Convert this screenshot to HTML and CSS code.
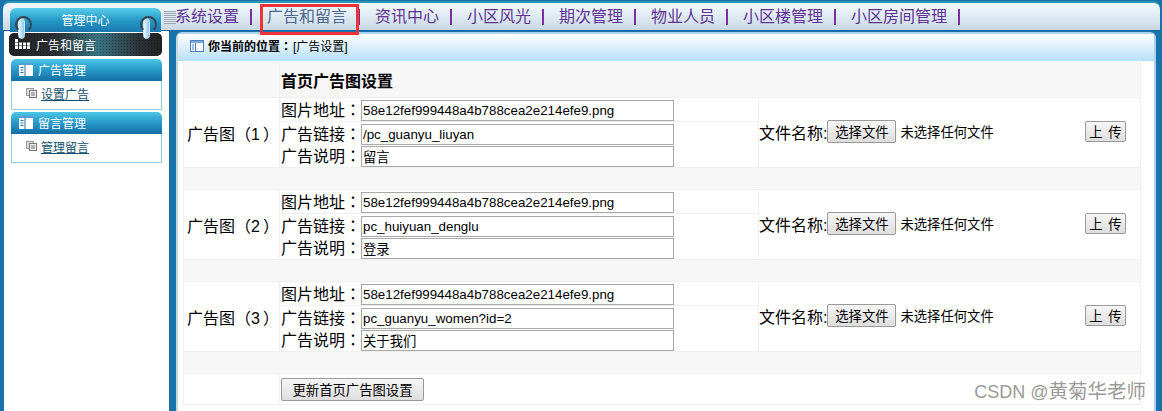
FILE: index.html
```html
<!DOCTYPE html>
<html lang="zh-CN">
<head>
<meta charset="utf-8">
<title>管理中心</title>
<link rel="stylesheet" href="styles.css">
</head>
<body>
<div class="page">
  <header class="top">
    <div class="tab">
      <span class="ring ring-l"></span>
      <span class="tab-title">管理中心</span>
      <span class="ring ring-r"></span>
    </div>
    <nav class="menu">
      <span class="grip"></span>
      <a class="mi">系统设置</a><i class="sep"></i>
      <a class="mi current">广告和留言</a><i class="sep"></i>
      <a class="mi">资讯中心</a><i class="sep"></i>
      <a class="mi">小区风光</a><i class="sep"></i>
      <a class="mi">期次管理</a><i class="sep"></i>
      <a class="mi">物业人员</a><i class="sep"></i>
      <a class="mi">小区楼管理</a><i class="sep"></i>
      <a class="mi">小区房间管理</a><i class="sep"></i>
    </nav>
    <div class="redbox"></div>
  </header>
  <div class="main">
    <aside class="side">
      <div class="dark">
        <svg class="dots" width="15" height="10" viewBox="0 0 15 10"><g fill="#fff"><rect x="0" y="0" width="3" height="3"/><rect x="0" y="3.500" width="3" height="3"/><rect x="0" y="7" width="3" height="3"/><rect x="4" y="3.500" width="3" height="3"/><rect x="4" y="7" width="3" height="3"/><rect x="8" y="3.500" width="3" height="3"/><rect x="8" y="7" width="3" height="3"/><rect x="12" y="3.500" width="3" height="3"/><rect x="12" y="7" width="3" height="3"/></g></svg>
        <span>广告和留言</span>
      </div>
      <section class="box">
        <h3 class="box-h"><svg class="ic" width="14" height="13" viewBox="0 0 14 13"><rect y="1" width="14" height="12" fill="#fff"/><rect width="14" height="2" fill="#5b9bd5"/><path d="M1.500 4.500h3M1.500 7h3M1.500 9.500h3" stroke="#2a6fa8"/><path d="M6 2v11" stroke="#2a6fa8"/></svg>广告管理</h3>
        <div class="box-b"><svg class="doc" width="11" height="10" viewBox="0 0 11 10"><rect x=".5" y=".5" width="7" height="7" fill="#ddd" stroke="#999"/><rect x="3.500" y="2.500" width="7" height="7" fill="#eee" stroke="#777"/><path d="M5 5h4M5 7h4" stroke="#777"/></svg><a class="lnk">设置广告</a></div>
      </section>
      <section class="box">
        <h3 class="box-h"><svg class="ic" width="14" height="13" viewBox="0 0 14 13"><rect y="1" width="14" height="12" fill="#fff"/><rect width="14" height="2" fill="#5b9bd5"/><path d="M1.500 4.500h3M1.500 7h3M1.500 9.500h3" stroke="#2a6fa8"/><path d="M6 2v11" stroke="#2a6fa8"/></svg>留言管理</h3>
        <div class="box-b"><svg class="doc" width="11" height="10" viewBox="0 0 11 10"><rect x=".5" y=".5" width="7" height="7" fill="#ddd" stroke="#999"/><rect x="3.500" y="2.500" width="7" height="7" fill="#eee" stroke="#777"/><path d="M5 5h4M5 7h4" stroke="#777"/></svg><a class="lnk">管理留言</a></div>
      </section>
    </aside>
    <main class="panel">
      <div class="crumb">
        <svg width="14" height="12" viewBox="0 0 14 12"><rect x=".5" y=".5" width="13" height="11" fill="#fff" stroke="#4a7fc0"/><rect x="1" y="1" width="12" height="2" fill="#7fa8dc"/><path d="M5.500 3v8" stroke="#4a7fc0"/><path d="M2 5h2M2 7h2M2 9h2" stroke="#4a7fc0"/></svg>
        <b>你当前的位置<span class="colon" lang="zh-TW">：</span></b><span class="where">[广告设置]</span>
      </div>
      <table class="grid">
        <colgroup><col class="c1"><col class="c2"><col class="c3"></colgroup>
        <tr class="head"><td></td><td colspan="2" class="title">首页广告图设置</td></tr>
        <tr class="row">
          <td class="name">广告图（1&thinsp;）</td>
          <td class="fields">
            <div class="field"><label>图片地址<span class="colon" lang="zh-TW">：</span></label><input class="txt" value="58e12fef999448a4b788cea2e214efe9.png"></div>
            <div class="field"><label>广告链接<span class="colon" lang="zh-TW">：</span></label><input class="txt" value="/pc_guanyu_liuyan"></div>
            <div class="field"><label>广告说明<span class="colon" lang="zh-TW">：</span></label><input class="txt" value="留言"></div>
          </td>
          <td><div class="upload"><span>文件名称:</span><button class="btn pick">选择文件</button><span class="none">未选择任何文件</span><button class="btn send">上 传</button></div></td>
        </tr>
        <tr class="gap"><td colspan="3"></td></tr>
        <tr class="row">
          <td class="name">广告图（2&thinsp;）</td>
          <td class="fields">
            <div class="field"><label>图片地址<span class="colon" lang="zh-TW">：</span></label><input class="txt" value="58e12fef999448a4b788cea2e214efe9.png"></div>
            <div class="field"><label>广告链接<span class="colon" lang="zh-TW">：</span></label><input class="txt" value="pc_huiyuan_denglu"></div>
            <div class="field"><label>广告说明<span class="colon" lang="zh-TW">：</span></label><input class="txt" value="登录"></div>
          </td>
          <td><div class="upload"><span>文件名称:</span><button class="btn pick">选择文件</button><span class="none">未选择任何文件</span><button class="btn send">上 传</button></div></td>
        </tr>
        <tr class="gap"><td colspan="3"></td></tr>
        <tr class="row">
          <td class="name">广告图（3&thinsp;）</td>
          <td class="fields">
            <div class="field"><label>图片地址<span class="colon" lang="zh-TW">：</span></label><input class="txt" value="58e12fef999448a4b788cea2e214efe9.png"></div>
            <div class="field"><label>广告链接<span class="colon" lang="zh-TW">：</span></label><input class="txt" value="pc_guanyu_women?id=2"></div>
            <div class="field"><label>广告说明<span class="colon" lang="zh-TW">：</span></label><input class="txt" value="关于我们"></div>
          </td>
          <td><div class="upload"><span>文件名称:</span><button class="btn pick">选择文件</button><span class="none">未选择任何文件</span><button class="btn send">上 传</button></div></td>
        </tr>
        <tr class="gap"><td colspan="3"></td></tr>
        <tr class="foot"><td></td><td colspan="2"><button class="btn save">更新首页广告图设置</button></td></tr>
      </table>
    </main>
  </div>
  <div class="mark">CSDN @<span>黄菊华老师</span></div>
</div>
</body>
</html>
```
FILE: styles.css
```css
* { box-sizing: border-box; }
html, body { margin: 0; height: 100%; overflow: hidden; }
body {
  font-family: "Liberation Sans", "Noto Sans CJK SC", sans-serif;
  font-size: 16px;
  color: #000;
  background: #1a72ab;
}
.page { position: relative; width: 1162px; height: 411px; overflow: hidden; display: flex; flex-direction: column; }
.colon { font-family: "Noto Sans CJK TC", sans-serif; line-height: 1; }

/* top bar */
.top {
  position: relative;
  z-index: 2;
  flex: none;
  height: 28px;
  margin: 3px 2px 0 3px;
  display: flex;
  border-radius: 6px 6px 0 0;
  background: linear-gradient(#f4fafe, #e3edf5 40%, #c9d8e4);
  border-bottom: 1px solid #14689f;
  box-shadow: 0 -2px 0 #2a96b8;
}
.tab {
  flex: none;
  position: relative;
  width: 151px;
  height: 24px;
  margin: 5px 0 0 7px;
  border-radius: 6px 6px 0 0;
  background: linear-gradient(#56cdea, #2496c4 55%, #1a78b0);
  color: #fff;
  font-size: 12px;
  line-height: 24px;
  text-align: center;
}
.tab-title { display: inline-block; padding-top: 1px; }
.ring {
  position: absolute;
  top: 10px;
  width: 7px;
  height: 21px;
  border-radius: 4px;
  background: linear-gradient(90deg, #eaf6fd, #8fc8f0);
  border: 1px solid #cfe8f8;
  z-index: 3;
}
.ring::before {
  content: "";
  position: absolute;
  left: -4px;
  top: -3px;
  width: 13px;
  height: 13px;
  border: 2px solid #3a4650;
  border-bottom-color: transparent;
  border-radius: 50%;
  z-index: -1;
}
.ring-l { left: 8px; }
.ring-r { right: 11px; }
.menu {
  flex: 1;
  display: flex;
  align-items: center;
  height: 24px;
  margin-top: 2px;
  padding-left: 3px;
  line-height: 24px;
}
.grip {
  width: 12px;
  height: 13px;
  margin-right: -1px;
  background: repeating-linear-gradient(#9aa6b2 0 1px, #e4ecf2 1px 2px);
}
.mi { flex: none; color: #5f3493; }
.mi.current { color: #4f6a8e; }
.sep { flex: none; width: 2px; height: 16px; margin: 0 15px 0 11px; background: #7b2f9e; }
.redbox {
  position: absolute;
  left: 257px;
  top: 1px;
  width: 99px;
  height: 31px;
  border: 3px solid #ee3338;
}

/* main area */
.main { flex: 1; display: flex; min-height: 0; padding: 0 6px 0 4px; }
.side {
  flex: none;
  width: 165px;
  padding: 2px 0 0 5px;
  background: #fff;
  margin-right: 7px;
}
.dark {
  display: flex;
  align-items: center;
  width: 153px;
  height: 23px;
  padding: 0 0 1px 6px;
  margin-bottom: 3px;
  border-radius: 5px;
  color: #fff;
  font-size: 12px;
  background:
    radial-gradient(circle, rgba(0,0,0,.3) 1px, transparent 1px) 0 0 / 3px 3px,
    linear-gradient(90deg, #222 0, #2a2f33 30%, #3b7584 58%, #2c3338 85%, #222 100%);
}
.dots { margin-right: 6px; }
.box { width: 151px; margin: 0 0 2px 2px; }
.box-h {
  display: flex;
  align-items: center;
  height: 22px;
  margin: 0;
  padding: 0 0 2px 8px;
  border-radius: 5px 5px 0 0;
  background: linear-gradient(#4cc6e6, #2a9ccb 45%, #136fa5);
  color: #fff;
  font-size: 12px;
  font-weight: normal;
}
.ic { margin-right: 5px; }
.box-b {
  display: flex;
  align-items: center;
  height: 29px;
  padding: 0 0 4px 14px;
  background: #fff;
  border: 1px solid #8fd0e0;
  border-top: 0;
  font-size: 12px;
}
.doc { margin-right: 4px; }
.lnk { color: #16506e; text-decoration: underline; }

.panel {
  flex: 1;
  min-width: 0;
  margin-top: 1px;
  padding-right: 13px;
  background: #fff;
  border: 2px solid #a9d3ec;
  border-left-color: #c8d6de;
  border-bottom: 0;
  border-radius: 6px 6px 0 0;
}
.crumb {
  display: flex;
  align-items: center;
  height: 27px;
  margin-right: -13px;
  padding: 0 0 4px 12px;
  background: linear-gradient(#fff, #b6dff6);
  font-size: 12px;
}
.crumb svg { margin-right: 4px; }
.where { margin-left: 1px; }
.grid {
  width: 958px;
  margin: 1px 0 0 5px;
  border-collapse: collapse;
  table-layout: fixed;
}
.c1 { width: 96px; }
.c2 { width: 479px; }
.grid td { padding: 0; border: 1px solid #f0f0f0; }
.head td { height: 35px; background: #f7f7f7; }
.grid .title { padding: 0 0 0 1px; font-weight: bold; }
.row td { height: 70px; }
.gap td { height: 22px; background: #f7f7f7; }
.foot td { height: 31px; padding-left: 1px; }
.grid .name { padding-left: 3px; white-space: nowrap; }
.grid .fields { padding: 0 0 0 1px; }
.field { display: flex; align-items: center; height: 24px; margin-left: -1px; padding: 2px 0 0 1px; border-bottom: 1px solid #f0f0f0; }
.field + .field { height: 24px; padding: 2px 0 1px 1px; border-bottom: 0; }
.field:last-child { height: 21px; padding: 0 0 0 1px; }
.field label { flex: none; width: 80px; white-space: nowrap; line-height: 20px; }
.txt {
  width: 313px;
  height: 21px;
  padding: 1px 1px;
  border: 1px solid #a9a9a9;
  font: 13.330px "Liberation Sans", "Noto Sans CJK SC", sans-serif;
  color: #000;
  background: #fff;
  outline: 0;
}
.upload { display: flex; align-items: center; padding: 0 14px 2px 0; }
.btn {
  height: 23px;
  padding: 0;
  border: 1px solid #9a9a9a;
  border-radius: 2px;
  background: linear-gradient(#f6f6f6, #dedede);
  color: #000;
  font: 13.330px "Liberation Sans", "Noto Sans CJK SC", sans-serif;
}
.pick { flex: none; width: 69px; }
.none { margin-left: 4px; font-size: 13.330px; }
.send { flex: none; width: 41px; height: 21px; margin-left: auto; word-spacing: 2px; }
.save { display: block; width: 143px; height: 23px; }

.mark {
  position: absolute;
  right: 16px;
  bottom: 7px;
  color: #9a9a9a;
  font-size: 18px;
  line-height: 24px;
}
.mark span { font-size: 19.500px; }
```
